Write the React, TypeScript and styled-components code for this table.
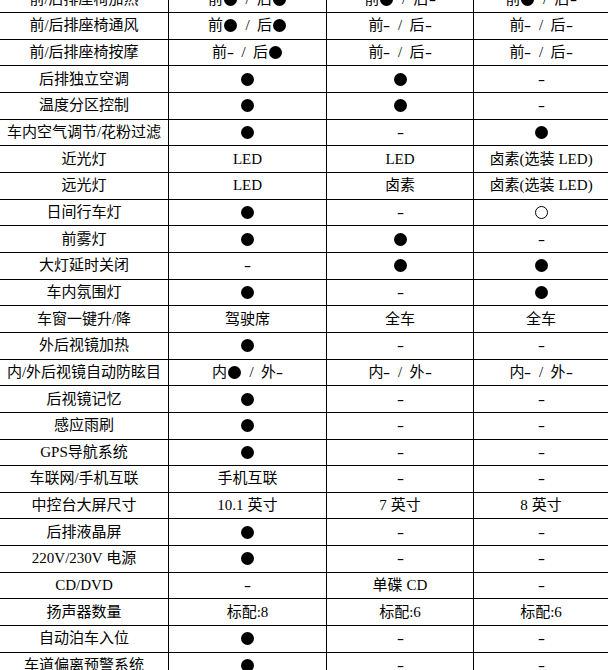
import React from "react";
import styled, { createGlobalStyle } from "styled-components";

const GlobalStyle = createGlobalStyle`
  html, body {
    margin: 0;
    padding: 0;
    background: #ffffff;
    overflow: hidden;
  }
  body {
    font-family: "Liberation Serif", "Noto Sans CJK SC", serif;
    color: #000000;
  }
`;

type Row = [string, string, string, string];

// "●" = 标配, "○" = 选装, "-" = 无
const rows: Row[] = [
  ["前/后排座椅加热", "前● / 后●", "前● / 后-", "前● / 后-"],
  ["前/后排座椅通风", "前● / 后●", "前- / 后-", "前- / 后-"],
  ["前/后排座椅按摩", "前- / 后●", "前- / 后-", "前- / 后-"],
  ["后排独立空调", "●", "●", "-"],
  ["温度分区控制", "●", "●", "-"],
  ["车内空气调节/花粉过滤", "●", "-", "●"],
  ["近光灯", "LED", "LED", "卤素(选装 LED)"],
  ["远光灯", "LED", "卤素", "卤素(选装 LED)"],
  ["日间行车灯", "●", "-", "○"],
  ["前雾灯", "●", "●", "-"],
  ["大灯延时关闭", "-", "●", "●"],
  ["车内氛围灯", "●", "-", "●"],
  ["车窗一键升/降", "驾驶席", "全车", "全车"],
  ["外后视镜加热", "●", "-", "-"],
  ["内/外后视镜自动防眩目", "内● / 外-", "内- / 外-", "内- / 外-"],
  ["后视镜记忆", "●", "-", "-"],
  ["感应雨刷", "●", "-", "-"],
  ["GPS导航系统", "●", "-", "-"],
  ["车联网/手机互联", "手机互联", "-", "-"],
  ["中控台大屏尺寸", "10.1 英寸", "7 英寸", "8 英寸"],
  ["后排液晶屏", "●", "-", "-"],
  ["220V/230V 电源", "●", "-", "-"],
  ["CD/DVD", "-", "单碟 CD", "-"],
  ["扬声器数量", "标配:8", "标配:6", "标配:6"],
  ["自动泊车入位", "●", "-", "-"],
  ["车道偏离预警系统", "●", "-", "-"],
];

const Page = styled.div`
  width: 608px;
  height: 670px;
  overflow: hidden;
`;

const Table = styled.div`
  display: grid;
  grid-template-columns: 169px 158px 147px 134px;
  grid-auto-rows: 26.67px;
  margin-top: -13.67px;
`;

const Cell = styled.div<{ $last?: boolean }>`
  display: flex;
  align-items: center;
  justify-content: center;
  box-sizing: border-box;
  border-bottom: 1px solid #000000;
  border-right: ${(p) => (p.$last ? "none" : "1px solid #000000")};
  font-size: 15px;
  line-height: 1;
  white-space: nowrap;
`;

const Dot = styled.span<{ $open?: boolean }>`
  display: inline-block;
  width: 13px;
  height: 13px;
  border-radius: 50%;
  box-sizing: border-box;
  background: ${(p) => (p.$open ? "transparent" : "#000000")};
  border: ${(p) => (p.$open ? "1px solid #000000" : "none")};
  font-size: 0;
  margin: 0 1px;
`;

const Dash = styled.span`
  display: inline-block;
  font-family: "Liberation Sans", sans-serif;
  transform: scaleX(1.5);
  margin: 0 1px;
`;

const Space = styled.span<{ $wide?: boolean }>`
  display: inline-block;
  width: ${(p) => (p.$wide ? "7.5px" : "4px")};
`;

const renderValue = (value: string) => {
  const chars = Array.from(value);
  return chars.map((ch, i) => {
    if (ch === "●") return <Dot key={i}>●</Dot>;
    if (ch === "○") return <Dot key={i} $open>○</Dot>;
    if (ch === "-") return <Dash key={i}>-</Dash>;
    if (ch === " ") {
      const wide = chars[i - 1] === "/" || chars[i + 1] === "/";
      return <Space key={i} $wide={wide}> </Space>;
    }
    return <span key={i}>{ch}</span>;
  });
};

const App = (): JSX.Element => {
  return (
    <Page>
      <GlobalStyle />
      <Table>
        {rows.map((row, r) =>
          row.map((value, c) => (
            <Cell key={`${r}-${c}`} $last={c === 3}>
              {c === 0 ? value : renderValue(value)}
            </Cell>
          ))
        )}
      </Table>
    </Page>
  );
};

export default App;
